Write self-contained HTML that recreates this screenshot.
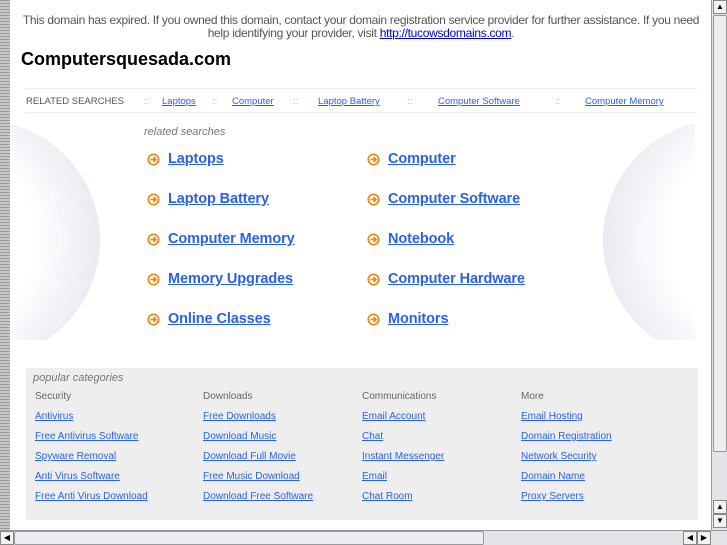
<!DOCTYPE html>
<html><head><meta charset="utf-8"><style>
*{margin:0;padding:0;box-sizing:border-box}
body{width:727px;height:545px;overflow:hidden;background:#fff;font-family:"Liberation Sans",sans-serif;position:relative}
a{color:#2a62e6;text-decoration:underline}
.lstripe{position:absolute;left:0;top:0;width:10px;height:530px;background:repeating-linear-gradient(#9a9a9a 0 1px,#c8c8c8 1px 3px)}
.vs{position:absolute;left:711px;top:0;width:16px;height:530px;background:#e4e4e8;border-left:1px solid #999}
.hs{position:absolute;left:0;top:530px;width:727px;height:15px;background:#e4e4e8;border-top:1px solid #999}
.btn{position:absolute;width:14px;height:14px;background:#f2f2f4;border:1px solid #888;font-size:8px;line-height:12px;text-align:center;color:#000}
.notice{position:absolute;left:12px;top:14px;width:698px;text-align:center;font-size:12px;letter-spacing:-0.3px;color:#555;line-height:13px}
h1{position:absolute;left:21px;top:49px;font-size:18px;font-weight:bold;color:#000}
.rel{position:absolute;left:25px;top:88px;width:672px;height:25px;border-top:1px solid #eee;border-bottom:1px solid #eee;font-size:9.5px}
.rel span,.rel a{position:absolute;top:7px}
.sep{color:#bbb}
.rs{position:absolute;left:144px;top:126px;font-size:11px;font-style:italic;color:#777}
.item{position:absolute;font-size:14.5px;font-weight:bold;letter-spacing:-0.1px}
.item svg{position:absolute;left:-21px;top:2px}
.pop{position:absolute;left:26px;top:368px;width:672px;height:152px;background:#eee;border-radius:3px}
.pop .t{position:absolute;left:7px;font-size:11px;font-style:italic;color:#777;top:4px}
.col{position:absolute;top:19px;font-size:10px;line-height:20px}
.col b{font-weight:normal;color:#666;display:block}
.col a{display:block}
</style></head><body>
<div class="lstripe"></div>
<div class="notice">This domain has expired. If you owned this domain, contact your domain registration service provider for further assistance. If you need help identifying your provider, visit <a href="#" style="color:#00c">http://tucowsdomains.com</a>.</div>
<h1>Computersquesada.com</h1>
<div class="rel">
<span style="left:1px;color:#555">RELATED SEARCHES</span>
<span class="sep" style="left:119px">::</span><a href="#" style="left:137px">Laptops</a>
<span class="sep" style="left:187px">::</span><a href="#" style="left:207px">Computer</a>
<span class="sep" style="left:268px">::</span><a href="#" style="left:293px">Laptop Battery</a>
<span class="sep" style="left:382px">::</span><a href="#" style="left:413px">Computer Software</a>
<span class="sep" style="left:530px">::</span><a href="#" style="left:560px">Computer Memory</a>
</div>
<div style="position:absolute;left:10px;top:120px;width:90px;height:220px;overflow:hidden"><div style="position:absolute;left:-150px;top:0;width:240px;height:240px;border-radius:50%;background:radial-gradient(circle at 30% 50%,#fff 50%,#dcdfe9 100%)"></div></div>
<div style="position:absolute;left:603px;top:120px;width:92px;height:220px;overflow:hidden"><div style="position:absolute;left:0;top:0;width:240px;height:240px;border-radius:50%;background:radial-gradient(circle at 70% 50%,#fff 50%,#dcdfe9 100%)"></div></div>
<div class="rs">related searches</div>
<svg width="0" height="0" style="position:absolute"><defs><g id="ar"><circle cx="6.5" cy="6.5" r="5.2" fill="#fff" stroke="#e08a1a" stroke-width="1.7"/><path d="M3.5 6.5H9M6.5 4L9.1 6.5 6.5 9" stroke="#e08a1a" stroke-width="1.7" fill="none"/></g></defs></svg>
<div class="item" style="left:168px;top:151px"><svg width="13" height="13"><use href="#ar"/></svg><a href="#">Laptops</a></div>
<div class="item" style="left:388px;top:151px"><svg width="13" height="13"><use href="#ar"/></svg><a href="#">Computer</a></div>
<div class="item" style="left:168px;top:191px"><svg width="13" height="13"><use href="#ar"/></svg><a href="#">Laptop Battery</a></div>
<div class="item" style="left:388px;top:191px"><svg width="13" height="13"><use href="#ar"/></svg><a href="#">Computer Software</a></div>
<div class="item" style="left:168px;top:231px"><svg width="13" height="13"><use href="#ar"/></svg><a href="#">Computer Memory</a></div>
<div class="item" style="left:388px;top:231px"><svg width="13" height="13"><use href="#ar"/></svg><a href="#">Notebook</a></div>
<div class="item" style="left:168px;top:271px"><svg width="13" height="13"><use href="#ar"/></svg><a href="#">Memory Upgrades</a></div>
<div class="item" style="left:388px;top:271px"><svg width="13" height="13"><use href="#ar"/></svg><a href="#">Computer Hardware</a></div>
<div class="item" style="left:168px;top:311px"><svg width="13" height="13"><use href="#ar"/></svg><a href="#">Online Classes</a></div>
<div class="item" style="left:388px;top:311px"><svg width="13" height="13"><use href="#ar"/></svg><a href="#">Monitors</a></div>
<div class="pop"><div class="t">popular categories</div>
<div class="col" style="left:9px"><b>Security</b><a href="#">Antivirus</a><a href="#">Free Antivirus Software</a><a href="#">Spyware Removal</a><a href="#">Anti Virus Software</a><a href="#">Free Anti Virus Download</a></div>
<div class="col" style="left:177px"><b>Downloads</b><a href="#">Free Downloads</a><a href="#">Download Music</a><a href="#">Download Full Movie</a><a href="#">Free Music Download</a><a href="#">Download Free Software</a></div>
<div class="col" style="left:336px"><b>Communications</b><a href="#">Email Account</a><a href="#">Chat</a><a href="#">Instant Messenger</a><a href="#">Email</a><a href="#">Chat Room</a></div>
<div class="col" style="left:495px"><b>More</b><a href="#">Email Hosting</a><a href="#">Domain Registration</a><a href="#">Network Security</a><a href="#">Domain Name</a><a href="#">Proxy Servers</a></div>
</div>
<div class="vs"><div class="btn" style="left:1px;top:0">▲</div><div style="position:absolute;left:1px;top:15px;width:14px;height:437px;background:#eceef2;border:1px solid #999;border-radius:2px"></div><div class="btn" style="left:1px;top:500px">▲</div><div class="btn" style="left:1px;top:514px">▼</div></div>
<div class="hs"><div class="btn" style="left:0;top:0">◀</div><div style="position:absolute;left:14px;top:0;width:470px;height:14px;background:#eceef2;border:1px solid #999;border-radius:2px"></div><div class="btn" style="left:683px;top:0">◀</div><div class="btn" style="left:697px;top:0">▶</div></div>
</body></html>
